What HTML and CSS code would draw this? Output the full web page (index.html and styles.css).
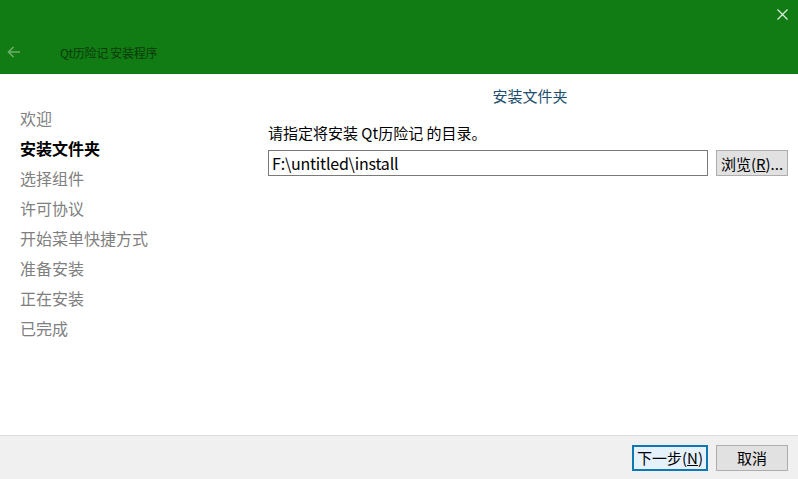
FILE: index.html
```html
<!DOCTYPE html>
<html lang="zh-CN">
<head>
    <meta charset="UTF-8">
    <title>Qt历险记 安装程序</title>
    <link rel="stylesheet" href="styles.css">
</head>
<body>
    <div class="window">
        <!-- Barra del titolo verde -->
        <div class="header">
            <div class="close-row">
                <svg class="close" width="11" height="11" viewBox="0 0 11 11"><path d="M0.5 0.5 L10.5 10.5 M10.5 0.5 L0.5 10.5" stroke="#dfeedd" stroke-width="1.2"/></svg>
            </div>
            <div class="title-row">
                <svg class="back" width="14" height="12" viewBox="0 0 14 12"><path d="M13 6 H1.5 M6.5 1 L1.5 6 L6.5 11" stroke="#6fae6c" stroke-width="1.6" fill="none"/></svg>
                <span class="app-title">Qt历险记 安装程序</span>
            </div>
        </div>

        <div class="main">
            <ul class="steps">
                <li>欢迎</li>
                <li class="current">安装文件夹</li>
                <li>选择组件</li>
                <li>许可协议</li>
                <li>开始菜单快捷方式</li>
                <li>准备安装</li>
                <li>正在安装</li>
                <li>已完成</li>
            </ul>

            <div class="page">
                <div class="page-title">安装文件夹</div>
                <div class="prompt">请指定将安装 Qt历险记 的目录。</div>
                <div class="path-row">
                    <div class="path-input">F:\untitled\install</div>
                    <button class="btn">浏览(<u>R</u>)...</button>
                </div>
            </div>
        </div>

        <div class="footer">
            <button class="btn btn-default">下一步(<u>N</u>)</button>
            <button class="btn">取消</button>
        </div>
    </div>
</body>
</html>
```
FILE: styles.css
```css
* { box-sizing: border-box; margin: 0; padding: 0; }
body { font-family: "Noto Sans CJK SC", "Liberation Sans", sans-serif; background: #ffffff; width: 798px; height: 479px; overflow: hidden; }
.window { display: flex; flex-direction: column; height: 479px; }

.header { background: #117c13; height: 74px; flex: none; display: flex; flex-direction: column; }
.close-row { display: flex; justify-content: flex-end; padding: 9px 10px 0 0; height: 32px; }
.title-row { display: flex; align-items: center; height: 24px; padding-left: 7px; margin-top: 8px; }
.back { margin-right: 39px; }
.app-title { font-size: 12px; color: #0b3a0c; letter-spacing: -0.3px; }

.main { flex: 1; display: flex; }
.steps { list-style: none; width: 248px; padding: 29px 0 0 20px; }
.steps li { font-size: 16px; line-height: 30px; height: 30px; color: #808080; }
.steps li.current { color: #000; font-weight: bold; }

.page { flex: 1; padding: 10px 10px 0 20px; }
.page-title { text-align: center; font-size: 15px; color: #1d4d6b; line-height: 24px; height: 24px; padding-left: 4px; }
.prompt { font-size: 15px; color: #000; margin-top: 13px; line-height: 24px; }
.path-row { display: flex; gap: 8px; margin-top: 5px; }
.path-input { width: 440px; height: 26px; border: 1px solid #7a7a7a; font-size: 16px; line-height: 24px; padding-left: 3px; color: #000; letter-spacing: -0.2px; }

.btn { height: 26px; width: 72px; border: 1px solid #adadad; background: #e1e1e1; font-family: inherit; font-size: 15px; color: #000; }
.btn-default { width: 76px; border: 2px solid #0e78b4; background: #e5f1fb; }

.footer { flex: none; height: 44px; background: #f0f0f0; border-top: 1px solid #dcdcdc; display: flex; justify-content: flex-end; align-items: center; gap: 8px; padding: 0 10px 0 0; }
```
